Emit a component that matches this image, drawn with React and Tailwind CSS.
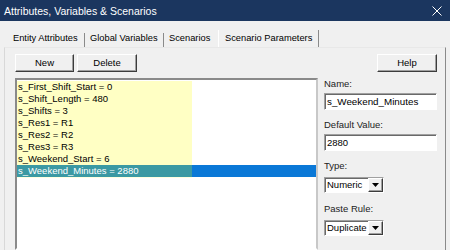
import React from 'react';

const rows = [
  's_First_Shift_Start = 0',
  's_Shift_Length = 480',
  's_Shifts = 3',
  's_Res1 = R1',
  's_Res2 = R2',
  's_Res3 = R3',
  's_Weekend_Start = 6',
  's_Weekend_Minutes = 2880',
];

const raised =
  'border border-t-white border-l-white border-r-[#3c3c3c] border-b-[#3c3c3c] shadow-[inset_-1px_-1px_0_#a0a0a0]';
const sunken =
  'border border-t-[#a0a0a0] border-l-[#a0a0a0] border-r-white border-b-white shadow-[inset_1px_1px_0_#696969]';

const Button = ({ label, w }) => (
  <div className={`flex h-[18px] items-center justify-center bg-[#f0f0f0] ${raised} ${w}`}>
    {label}
  </div>
);

const Combo = ({ value }) => (
  <div className={`flex h-[16px] w-[60px] items-stretch bg-white ${sunken}`}>
    <div className="flex flex-1 items-center pl-[2px]">{value}</div>
    <div className={`flex w-[15px] items-center justify-center bg-[#f0f0f0] ${raised}`}>
      <svg width="7" height="4" viewBox="0 0 7 4">
        <path d="M0 0h7L3.5 4z" fill="#000" />
      </svg>
    </div>
  </div>
);

export default function App() {
  return (
    <div
      className="flex h-[250px] w-[450px] flex-col overflow-hidden bg-[#f0f0f0] text-[9.5px] leading-[12px] text-black"
      style={{ fontFamily: '"Liberation Sans", Arial, sans-serif' }}
    >
      {/* Title bar */}
      <div className="flex h-[21px] shrink-0 items-center justify-between bg-[#1b365f] pl-[4px] pr-[8px] text-[10.5px] text-white">
        <span>Attributes, Variables &amp; Scenarios</span>
        <svg width="10" height="10" viewBox="0 0 10 10">
          <path d="M0.5 0.5l9 9M9.5 0.5l-9 9" stroke="#fff" strokeWidth="1" />
        </svg>
      </div>

      {/* Tabs */}
      <div className="flex h-[26px] shrink-0 items-end pl-[8px]">
        <div className="flex h-[14px] w-[77px] items-start border-r border-[#8a8a8a] pl-[5px] text-[9.3px] leading-[11px]">
          Entity Attributes
        </div>
        <div className="flex h-[14px] w-[79px] items-start border-r border-[#8a8a8a] pl-[5px] text-[9.3px] leading-[11px]">
          Global Variables
        </div>
        <div className="flex h-[14px] w-[54px] items-start pl-[5px] text-[9.3px] leading-[11px]">
          Scenarios
        </div>
        <div className="flex h-[17px] w-[101px] items-start border-r border-l border-r-[#8a8a8a] border-l-white pl-[6px] pt-[3px] text-[9.3px] leading-[11px]">
          Scenario Parameters
        </div>
      </div>

      {/* Panel */}
      <div className="mx-[4px] flex min-h-0 flex-1 border-l border-r border-t border-l-[#d8d8d8] border-r-[#8a8a8a] border-t-[#e8e8e8] pl-[10px] pt-[6px]">
        {/* Left column */}
        <div className="flex w-[303px] flex-col">
          <div className="flex gap-[3px]">
            <Button label="New" w="w-[59px]" />
            <Button label="Delete" w="w-[60px]" />
          </div>
          <div className={`mt-[6px] flex-1 border-2 bg-white border-t-[#8a8a8a] border-l-[#8a8a8a] border-r-[#c8c8c8] border-b-white pt-[1px]`}>
            <div className="pb-[1px]">
              {rows.map((r, i) => {
                const sel = i === rows.length - 1;
                return (
                  <div key={r} className="flex h-[12px]">
                    <div
                      className={`w-[175px] whitespace-nowrap pl-[1px] ${
                        sel ? 'bg-[#3b99a3] text-white' : 'bg-[#ffffc4]'
                      }`}
                    >
                      {r}
                    </div>
                    <div className={`flex-1 ${sel ? 'bg-[#0a78d7]' : ''}`} />
                  </div>
                );
              })}
              <div className="h-[1px] w-[175px] bg-[#ffffe0]" />
            </div>
          </div>
        </div>

        {/* Right column */}
        <div className="ml-[6px] flex w-[113px] flex-col">
          <div className="flex justify-end">
            <Button label="Help" w="w-[60px]" />
          </div>
          <div className="mt-[6px] text-[#222]">Name:</div>
          <div className={`mt-[3px] flex h-[17px] items-center bg-white pl-[2px] text-[9.8px] ${sunken}`}>
            s_Weekend_Minutes
          </div>
          <div className="mt-[9px] text-[#222]">Default Value:</div>
          <div className={`mt-[3px] flex h-[17px] items-center bg-white pl-[2px] ${sunken}`}>
            2880
          </div>
          <div className="mt-[9px] text-[#222]">Type:</div>
          <div className="mt-[5px]">
            <Combo value="Numeric" />
          </div>
          <div className="mt-[10px] text-[#222]">Paste Rule:</div>
          <div className="mt-[5px]">
            <Combo value="Duplicate" />
          </div>
        </div>
      </div>
    </div>
  );
}
